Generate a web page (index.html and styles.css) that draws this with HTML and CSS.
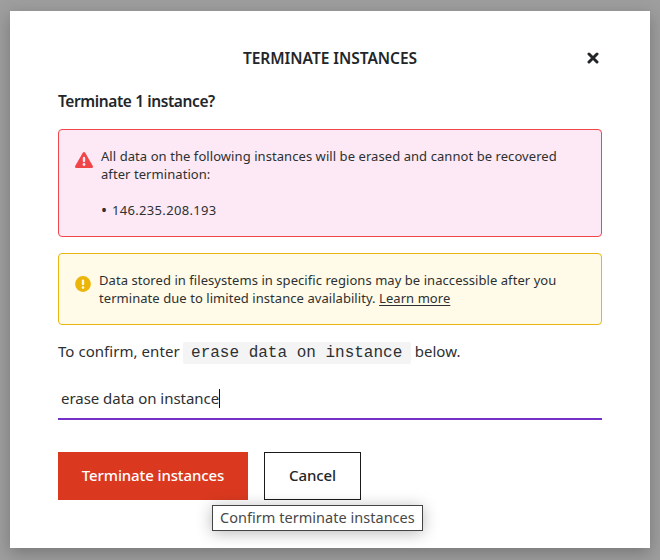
FILE: index.html
```html
<!DOCTYPE html>
<html lang="en">
<head>
<meta charset="utf-8">
<title>Terminate instances</title>
<link rel="stylesheet" href="styles.css">
</head>
<body>
<main class="modal" role="dialog" aria-labelledby="title">
  <header class="modal-header">
    <h1 class="title" id="title">TERMINATE INSTANCES</h1>
    <button class="close" aria-label="Close">
      <svg width="12" height="12" viewBox="0 0 12 12"><path d="M2 2L10 10M10 2L2 10" stroke="#222629" stroke-width="3" stroke-linecap="round"/></svg>
    </button>
  </header>
  <h2 class="question">Terminate 1 instance?</h2>
  <section class="alert danger">
    <svg class="alert-icon" width="18" height="16" viewBox="0 0 18 16"><path d="M7.8.7Q9-.7 10.2.7L17.8 14Q18.500 16 16.500 16H1.500Q-.5 16 .2 14Z" fill="#f04448"/><path d="M9 6V9" stroke="#fdeaf5" stroke-width="2.400" stroke-linecap="round"/><circle cx="9" cy="12.500" r="1.400" fill="#fdeaf5"/></svg>
    <div class="alert-text">
      <p>All data on the following instances will be erased and cannot be recovered<br>after termination:</p>
      <p class="item"><span class="bullet">•</span><span class="address">146.235.208.193</span></p>
    </div>
  </section>
  <section class="alert warning">
    <svg class="alert-icon" width="16" height="16" viewBox="0 0 16 16"><circle cx="8" cy="8" r="7.900" fill="#ebb509"/><path d="M8 4.700V8" stroke="#fffbe8" stroke-width="2.400" stroke-linecap="round"/><circle cx="8" cy="11.600" r="1.300" fill="#fffbe8"/></svg>
    <p class="alert-text">Data stored in filesystems in specific regions may be inaccessible after you<br>terminate due to limited instance availability.&nbsp;<a class="learn">Learn more</a></p>
  </section>
  <label class="confirm"><span class="confirm-text">To confirm, enter</span><code>erase data on instance</code><span class="confirm-text">below.</span></label>
  <div class="field"><span class="typed">erase data on instance</span><span class="caret"></span></div>
  <div class="actions">
    <button class="btn primary">Terminate instances</button>
    <button class="btn secondary">Cancel</button>
  </div>
</main>
<div class="tooltip" role="tooltip">Confirm terminate instances</div>
</body>
</html>
```
FILE: styles.css
```css
* { box-sizing: border-box; }
body {
  margin: 0;
  height: 560px;
  padding: 11px 10px 12px;
  overflow: hidden;
  background: #9e9e9e;
  color: #2d3032;
  font-family: "Noto Sans", sans-serif;
}
h1, h2, p { margin: 0; }
button { font-family: inherit; padding: 0; margin: 0; }
.modal {
  height: 537px;
  padding: 35px 48px 48px;
  background: #fff;
  box-shadow: 0 5px 16px rgba(0, 0, 0, .25);
}
.modal-header {
  display: grid;
  grid-template-columns: 20px 1fr 20px;
  align-items: center;
  height: 24px;
}
.title {
  grid-column: 2;
  text-align: center;
  font-size: 15.5px;
  font-weight: 600;
  line-height: 24px;
  letter-spacing: -.03px;
  color: #222629;
}
.close {
  display: flex;
  justify-content: center;
  padding: 0 0 1px 1px;
  border: 0;
  background: none;
}
.question {
  margin-top: 19px;
  font-size: 15.5px;
  font-weight: 600;
  line-height: 24px;
  letter-spacing: -.4px;
  color: #222629;
}
.alert {
  display: flex;
  margin-top: 16px;
  padding: 17px 16px;
  border: 1px solid;
  border-radius: 4px;
  font-size: 13px;
  line-height: 18px;
  letter-spacing: .067px;
  white-space: nowrap;
}
.danger {
  height: 108px;
  border-color: #ef454b;
  background: #fce9f5;
}
.warning {
  height: 72px;
  border-color: #e9b512;
  background: #fffbe8;
  letter-spacing: .055px;
}
.alert-icon { flex: none; margin-top: 5px; }
.alert-text { margin-left: 8px; }
.item { display: flex; margin-top: 18px; }
.bullet { width: 11px; font-size: 16px; }
.address { letter-spacing: .32px; }
.learn { text-decoration: underline; text-underline-offset: 2px; }
.confirm {
  display: flex;
  align-items: center;
  height: 22px;
  margin-top: 17px;
  font-size: 15px;
  line-height: 20px;
  white-space: nowrap;
}
.confirm-text { padding-bottom: 5px; letter-spacing: .05px; }
code {
  height: 22px;
  margin: 0 4px 0 3px;
  padding: 0 8.4px;
  border-radius: 2px;
  background: #f4f4f4;
  font: 16px/22px "Liberation Mono", monospace;
}
.field {
  display: flex;
  align-items: center;
  height: 42px;
  margin-top: 14px;
  padding-left: 3px;
  border-bottom: 2px solid #7332c5;
  font-size: 15px;
}
.typed { letter-spacing: -.04px; }
.caret { width: 1px; height: 19px; background: #111; }
.actions { display: flex; gap: 16px; margin-top: 32px; }
.btn {
  height: 48px;
  padding-bottom: 2px;
  font-size: 15px;
  font-weight: 500;
  letter-spacing: -.12px;
  white-space: nowrap;
}
.primary { width: 190px; border: 0; background: #da391f; color: #fff; }
.secondary { width: 97px; border: 1px solid #181a1b; background: #fff; color: #222629; }
.tooltip {
  position: absolute;
  left: 212px;
  top: 505px;
  width: 211px;
  height: 26px;
  padding-left: 7px;
  border: 1px solid #444;
  background: #fff;
  box-shadow: 0 2px 16px rgba(0, 0, 0, .28);
  color: #484848;
  font-size: 14.5px;
  letter-spacing: .03px;
  line-height: 22px;
  white-space: nowrap;
}
```
